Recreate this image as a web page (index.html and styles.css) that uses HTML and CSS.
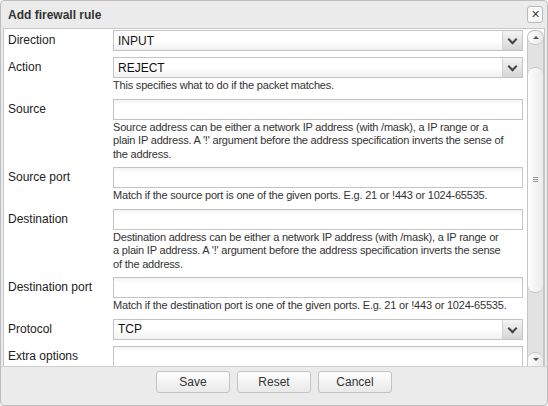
FILE: index.html
```html
<!DOCTYPE html>
<html>
<head lang="en">
    <meta charset="UTF-8">
    <title>Add firewall rule</title>
    <link rel="stylesheet" href="styles.css">
</head>
<body>
<div class="dialog">
    <div class="titlebar">
        <span class="title">Add firewall rule</span>
        <span class="close">&#x2715;</span>
    </div>
    <div class="content">
        <div class="form">
            <div class="row">
                <div class="label">Direction</div>
                <div class="field"><div class="select"><span>INPUT</span><i class="arrow"></i></div></div>
            </div>
            <div class="row">
                <div class="label">Action</div>
                <div class="field">
                    <div class="select"><span>REJECT</span><i class="arrow"></i></div>
                    <div class="help">This specifies what to do if the packet matches.</div>
                </div>
            </div>
            <div class="row">
                <div class="label">Source</div>
                <div class="field">
                    <div class="input"></div>
                    <div class="help">Source address can be either a network IP address (with /mask), a IP range or a<br>plain IP address. A '!' argument before the address specification inverts the sense of<br>the address.</div>
                </div>
            </div>
            <div class="row">
                <div class="label">Source port</div>
                <div class="field">
                    <div class="input"></div>
                    <div class="help">Match if the source port is one of the given ports. E.g. 21 or !443 or 1024-65535.</div>
                </div>
            </div>
            <div class="row">
                <div class="label">Destination</div>
                <div class="field">
                    <div class="input"></div>
                    <div class="help">Destination address can be either a network IP address (with /mask), a IP range or<br>a plain IP address. A '!' argument before the address specification inverts the sense<br>of the address.</div>
                </div>
            </div>
            <div class="row">
                <div class="label">Destination port</div>
                <div class="field">
                    <div class="input"></div>
                    <div class="help">Match if the destination port is one of the given ports. E.g. 21 or !443 or 1024-65535.</div>
                </div>
            </div>
            <div class="row">
                <div class="label">Protocol</div>
                <div class="field"><div class="select"><span>TCP</span><i class="arrow"></i></div></div>
            </div>
            <div class="row">
                <div class="label">Extra options</div>
                <div class="field"><div class="input"></div></div>
            </div>
        </div>
        <div class="scrollbar">
            <div class="sb-btn up"><i></i></div>
            <div class="sb-track">
                <div class="sb-thumb"><span class="grip"></span></div>
            </div>
            <div class="sb-btn down"><i></i></div>
        </div>
    </div>
    <div class="buttons">
        <button>Save</button>
        <button>Reset</button>
        <button>Cancel</button>
    </div>
</div>
</body>
</html>
```

FILE: styles.css
```css
html, body{
    margin: 0;
    background: #fff;
    font-family: "Liberation Sans", Arial, sans-serif;
    font-size: 12px;
    color: #222;
}
.dialog{
    width: 546px;
    height: 404px;
    border: 1px solid #bdbdbd;
    border-radius: 4px;
    background: #ebebeb;
    display: flex;
    flex-direction: column;
    overflow: hidden;
}
.titlebar{
    height: 27px;
    display: flex;
    align-items: center;
    justify-content: space-between;
    padding: 0 4px 0 7px;
}
.title{
    font-weight: bold;
    color: #333;
}
.close{
    width: 14px;
    height: 15px;
    border: 1px solid #b8b8b8;
    border-radius: 3px;
    background: #fafafa;
    font-size: 11px;
    line-height: 15px;
    text-align: center;
    color: #444;
}
.content{
    height: 337px;
    margin: 0 2px;
    border: 1px solid #c8c8c8;
    border-bottom: none;
    background: #fff;
    display: flex;
}
.form{
    flex: 1;
    overflow: hidden;
    padding: 1px 3px 0 4px;
}
.row{
    display: flex;
    margin-bottom: 6px;
}
.label{
    width: 105px;
    flex: none;
    line-height: 21px;
    color: #222;
}
.field{
    flex: 1;
}
.input, .select{
    height: 19px;
    border: 1px solid #c4c4c4;
    background: linear-gradient(#f3f3f3, #fff 5px);
}
.select{
    display: flex;
    align-items: center;
    background: linear-gradient(#fff, #fff 50%, #f1f1f1);
}
.select span{
    flex: 1;
    padding-left: 4px;
    color: #111;
}
.arrow{
    width: 19px;
    height: 19px;
    border-left: 1px solid #d2d2d2;
    background: linear-gradient(#f4f4f4, #d6d6d6);
    position: relative;
}
.arrow:after{
    content: "";
    position: absolute;
    left: 6px;
    top: 5px;
    width: 5px;
    height: 5px;
    border-right: 2px solid #444;
    border-bottom: 2px solid #444;
    transform: rotate(45deg);
}
.help{
    margin-top: 1px;
    font-size: 11px;
    letter-spacing: -0.2px;
    line-height: 13.5px;
    color: #333;
}
.scrollbar{
    width: 15px;
    margin: 1px 0 0 1px;
    border: 1px solid #c6c6c6;
    border-bottom: none;
    border-radius: 7px 7px 0 0;
    background: #e2e2e2;
    display: flex;
    flex-direction: column;
}
.sb-btn{
    height: 13px;
    background: linear-gradient(to right, #fdfdfd, #e9e9e9);
    border-bottom: 1px solid #c6c6c6;
    position: relative;
}
.sb-btn.up{
    border-radius: 7px;
}
.sb-btn.down{
    border-bottom: none;
    border-top: 1px solid #c6c6c6;
    border-radius: 7px 7px 0 0;
}
.sb-btn i{
    position: absolute;
    left: 5px;
    top: 5px;
    border-left: 3px solid transparent;
    border-right: 3px solid transparent;
}
.sb-btn.up i{
    border-bottom: 3px solid #555;
}
.sb-btn.down i{
    border-top: 3px solid #555;
}
.sb-track{
    flex: 1;
    padding-top: 22px;
}
.sb-thumb{
    height: 224px;
    border: 1px solid #c6c6c6;
    border-left: none;
    border-right: none;
    border-radius: 7px;
    background: linear-gradient(to right, #fdfdfd, #ececec);
    display: flex;
    align-items: center;
    justify-content: center;
}
.grip{
    width: 5px;
    height: 6px;
    background: repeating-linear-gradient(#999 0, #999 1px, transparent 1px, transparent 2px);
}
.buttons{
    flex: 1;
    display: flex;
    justify-content: center;
    align-items: flex-start;
    gap: 7px;
    padding-top: 4px;
    border-top: 1px solid #d0d0d0;
}
.buttons button{
    width: 74px;
    height: 22px;
    border: 1px solid #c3c3c3;
    border-radius: 3px;
    background: linear-gradient(#fefefe, #e9e9e9);
    font-family: "Liberation Sans", Arial, sans-serif;
    font-size: 12px;
    color: #333;
}
```
